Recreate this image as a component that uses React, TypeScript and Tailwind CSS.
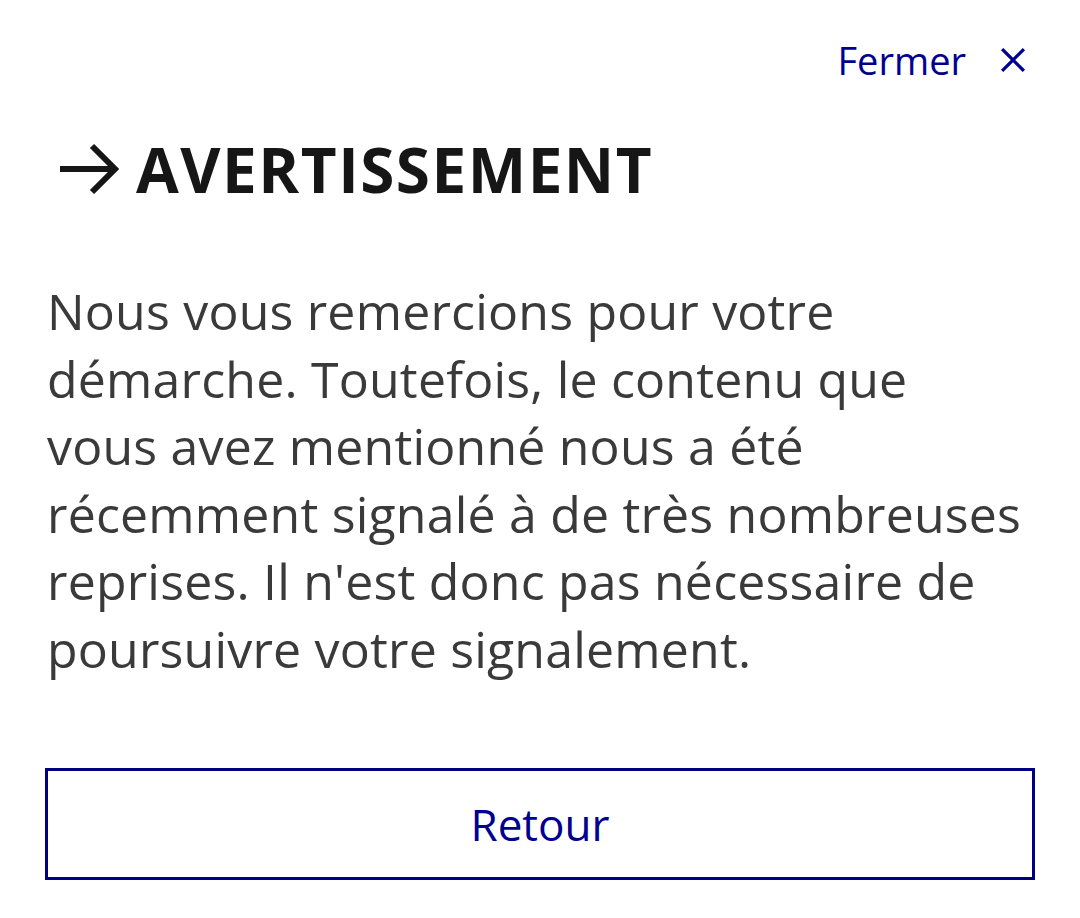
import React from "react";

const lines = [
  "Nous vous remercions pour votre",
  "démarche. Toutefois, le contenu que",
  "vous avez mentionné nous a été",
  "récemment signalé à de très nombreuses",
  "reprises. Il n'est donc pas nécessaire de",
  "poursuivre votre signalement.",
];

const App = () => {
  return (
    <div
      className="h-[918px] w-[1080px] overflow-hidden bg-white"
      style={{ fontFamily: '"Open Sans", "Noto Sans", sans-serif' }}
    >
      <div className="flex justify-end pr-[54px] pt-[34px]">
        <button className="flex items-center gap-[34px] text-[38px] leading-[52px] text-[#000091]">
          <span>Fermer</span>
          <svg width="26" height="26" viewBox="0 0 24 24" fill="none">
            <path
              d="M3 3L21 21M21 3L3 21"
              stroke="#000091"
              strokeWidth="3"
              strokeLinecap="square"
            />
          </svg>
        </button>
      </div>

      <div className="mt-[51px] flex items-center gap-[16px] pl-[58px]">
        <svg width="62" height="56" viewBox="0 0 62 56" fill="none">
          <path
            d="M2 28H56M34 5L57 28L34 51"
            stroke="#161616"
            strokeWidth="6"
          />
        </svg>
        <h1 className="text-[62px] font-bold leading-[64px] tracking-[1.5px] text-[#161616]">
          AVERTISSEMENT
        </h1>
      </div>

      <div className="mt-[77px] pl-[47px] text-[50px] leading-[67.5px] tracking-[0.2px] text-[#3a3a3a]">
        {lines.map((l) => (
          <div key={l} className="whitespace-nowrap">
            {l}
          </div>
        ))}
      </div>

      <div className="mt-[85px] px-[45px]">
        <button className="flex h-[112px] w-full items-center justify-center border-[3px] border-[#000080] text-[44px] text-[#000091]">
          Retour
        </button>
      </div>
    </div>
  );
};

export default App;
